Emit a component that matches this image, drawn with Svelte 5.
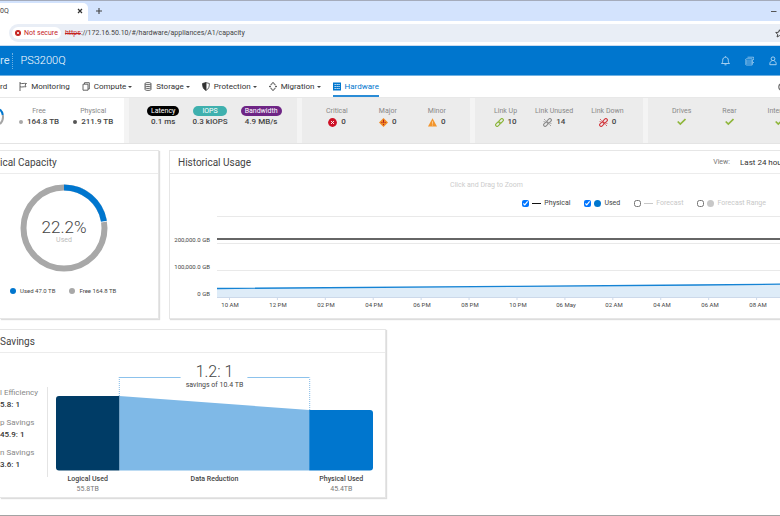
<script>
  const nav = [
    { label: 'Monitoring', icon: 'flag', menu: false },
    { label: 'Compute', icon: 'compute', menu: true },
    { label: 'Storage', icon: 'storage', menu: true },
    { label: 'Protection', icon: 'shield', menu: true },
    { label: 'Migration', icon: 'migration', menu: true },
    { label: 'Hardware', icon: 'hardware', menu: false, active: true }
  ];
  const perf = [
    { label: 'Latency', value: '0.1 ms', tone: 'black' },
    { label: 'IOPS', value: '0.3 kIOPS', tone: 'teal' },
    { label: 'Bandwidth', value: '4.9 MB/s', tone: 'purple' }
  ];
  const alerts = [
    { label: 'Critical', value: 0, icon: 'critical' },
    { label: 'Major', value: 0, icon: 'major' },
    { label: 'Minor', value: 0, icon: 'minor' }
  ];
  const links = [
    { label: 'Link Up', value: 10, color: '#8ab53a', broken: false },
    { label: 'Link Unused', value: 14, color: '#8c8c8c', broken: true },
    { label: 'Link Down', value: 0, color: '#d2393f', broken: true }
  ];
  const parts = ['Drives', 'Rear', 'Internal'];
  const hours = ['10 AM', '12 PM', '02 PM', '04 PM', '06 PM', '08 PM', '10 PM', '06 May', '02 AM', '04 AM', '06 AM', '08 AM'];
  const levels = ['200,000.0 GB', '100,000.0 GB', '0 GB'];
  const ratios = [
    { label: 'l Efficiency', value: '5.8: 1' },
    { label: 'p Savings', value: '45.9: 1' },
    { label: 'n Savings', value: '3.6: 1' }
  ];
  let series = $state([
    { label: 'Physical', mark: 'line', color: '#111', on: true },
    { label: 'Used', mark: 'disc', color: '#0076ce', on: true },
    { label: 'Forecast', mark: 'line', color: '#c8c8c8', on: false },
    { label: 'Forecast Range', mark: 'disc', color: '#c8c8c8', on: false }
  ]);
  const ring = 2 * Math.PI * 40.5;
</script>

<div class="page">
  <div class="tabs">
    <div class="tab"><span>0Q</span><button aria-label="Close tab"><svg width="6" height="6" viewBox="0 0 6 6"><path d="M1 1l4 4M5 1L1 5" stroke="#333" stroke-width="1.2" /></svg></button></div>
    <button class="newtab" aria-label="New tab"><svg width="6" height="6" viewBox="0 0 6 6"><path d="M3 0v6M0 3h6" stroke="#444" stroke-width="1.1" /></svg></button>
    <button class="minimize" aria-label="Minimize"><svg width="6" height="6" viewBox="0 0 6 6"><path d="M0 3.500h5.500" stroke="#555" /></svg></button>
  </div>
  <div class="toolbar">
    <div class="address">
      <span class="chip">
        <svg width="6" height="6" viewBox="0 0 6 6"><circle cx="3" cy="3" r="3" fill="#c5221f" /><path d="M1.900 1.900l2.200 2.200M4.100 1.900L1.900 4.100" stroke="#fff" stroke-width=".8" /></svg>
        Not secure
      </span>
      <span class="url"><s>https</s>://172.16.50.10/#/hardware/appliances/A1/capacity</span>
      <svg class="star" width="9" height="9" viewBox="0 0 9 9"><path d="M4.500 .8l1.100 2.500 2.700.2-2 1.800.6 2.700-2.400-1.400L2.100 8l.6-2.700-2-1.800 2.700-.2z" fill="none" stroke="#444" /></svg>
    </div>
  </div>

  <header>
    <span class="brand">re</span>
    <span class="product">PS3200Q</span>
    <div class="tools">
      <button aria-label="Alerts"><svg width="9" height="10" viewBox="0 0 9 10"><path d="M.5 7.500c1-.8 1.200-1.600 1.200-3.200C1.700 2.400 2.800 1.200 4.500 1.200s2.800 1.200 2.800 3.100c0 1.600.2 2.400 1.200 3.200zM3.500 8.800h2M4.500 .3v.9" /></svg></button>
      <button aria-label="Jobs"><svg width="9" height="10" viewBox="0 0 9 10"><path d="M2.500 1.200h6v1.500M7.200 2.800H1.500Q.6 2.800.6 3.900t.9 1.100h6.500M1.500 5Q.6 5 .6 6t.9 1h6.500M1.500 7Q.6 7 .6 8t.9 1h5.700V2.800M8.500 3v1M8.500 6v1" stroke-width=".7" /></svg></button>
      <button aria-label="Account"><svg width="8" height="10" viewBox="0 0 8 10"><circle cx="4" cy="2.800" r="1.900" /><path d="M2.700 5C1.300 5.500.8 6.500.8 8.700h6.400C7.200 6.500 6.700 5.500 5.300 5" /></svg></button>
    </div>
  </header>

  <nav>
    <a class="first" href="#dashboard">rd</a>
    {#each nav as item}
      <a href="#{item.icon}" class:active={item.active}>
        <svg width="8" height="9" viewBox="0 0 8 9" fill="none" stroke="#555" stroke-width=".9">
          {#if item.icon === 'flag'}
            <path d="M1 0v9M1 1.200c2 .9 4-.2 6.500.3L6 3l1 1.800C5 4.500 3 5.300 1 4.800" />
          {:else if item.icon === 'compute'}
            <path d="M1 2.200h5v6H1zM2.500 2V.7h4.800v6.300H6" />
          {:else if item.icon === 'storage'}
            <path d="M1 1.500c0-1.200 6-1.200 6 0v6c0 1.200-6 1.200-6 0zM1 2c1 .9 5 .9 6 0M1 3.900c1 .9 5 .9 6 0M1 5.800c1 .9 5 .9 6 0" />
          {:else if item.icon === 'shield'}
            <path d="M4 .6L.6 1.500c0 3.500.7 5.500 3.400 6.900z" fill="#333" stroke="#333" /><path d="M4 .6l3.400.9c0 3.500-.7 5.500-3.400 6.900" />
          {:else if item.icon === 'migration'}
            <path d="M2 3.200V2h1.200M4.800 2H6v1.200M6 5.800V7H4.800M3.200 7H2V5.800M0 4.500h2M6 4.500h2M4 .4v1.600M4 7v1.600M3 1.400l1-1 1 1M3 7.600l1 1 1-1M1 3.600l-.8.9.8.9M7 3.600l.8.9-.8.9" />
          {:else}
            <path d="M0 .5h8v8H0z" fill="#0076ce" stroke="none" /><path d="M1.500 2h1.300v1H1.500zM3.500 2h1.300v1H3.500zM5.400 2h1.300v1H5.400zM1.500 4h1.300v1H1.500zM3.500 4h1.300v1H3.500zM5.400 4h1.300v1H5.400zM1.500 6h1.300v1H1.500zM3.500 6h1.300v1H3.500zM5.400 6h1.300v1H5.400z" fill="#d7ebfa" stroke="none" />
          {/if}
        </svg>
        {item.label}
        {#if item.menu}<i class="caret"></i>{/if}
      </a>
    {/each}
    <button class="settings" aria-label="Settings"><svg width="8" height="8" viewBox="0 0 8 8"><circle cx="4" cy="4" r="3.200" fill="none" stroke="#666" stroke-width="1.200" /></svg></button>
  </nav>

  <section class="strip">
    <div class="capacity">
      <svg width="5" height="30" viewBox="0 0 5 30"><g fill="none" stroke-width="2"><path d="M0 7.500A10 10 0 0 1 2.800 13" stroke="#0076ce" /><path d="M2.800 13A10 10 0 0 1 0 22" stroke="#a5a5a5" /></g></svg>
      <div class="kpi"><span>Free</span><b><i class="dot light"></i>164.8 TB</b></div>
      <div class="kpi"><span>Physical</span><b><i class="dot dark"></i>211.9 TB</b></div>
    </div>
    <div class="tile perf">
      {#each perf as p}
        <div class="kpi"><span class="pill {p.tone}">{p.label}</span><b>{p.value}</b></div>
      {/each}
    </div>
    <div class="tile wide">
      {#each alerts as a}
        <div class="kpi"><span>{a.label}</span><b>
          <svg width="9" height="9" viewBox="0 0 9 9">
            {#if a.icon === 'critical'}
              <circle cx="4.500" cy="4.500" r="4.400" fill="#ce1126" /><path d="M3 3l3 3M6 3L3 6" stroke="#fff" stroke-width=".9" />
            {:else if a.icon === 'major'}
              <path d="M4.500 0L9 4.500 4.500 9 0 4.500z" fill="#f08a24" /><path d="M4.500 1.800v3M4.500 5.900v1.200M2.400 4.500h1M5.600 4.500h1" stroke="#b01c1c" />
            {:else}
              <path d="M4.500 .3L9 8.500H0z" fill="#f2952d" /><path d="M4.500 3.200v2.600M4.500 6.500v1" stroke="#fbd9ae" stroke-width=".8" />
            {/if}
          </svg>{a.value}</b></div>
      {/each}
    </div>
    <div class="tile links">
      {#each links as l}
        <div class="kpi"><span>{l.label}</span><b>
          <svg width="9" height="9" viewBox="0 0 9 9" fill="none" stroke={l.color} stroke-width="1.100">
            <rect x="-2.600" y="-1.500" width="5.200" height="3" rx="1.500" transform="translate(2.900 6.100) rotate(-45)" />
            <rect x="-2.600" y="-1.500" width="5.200" height="3" rx="1.500" transform="translate(6.100 2.900) rotate(-45)" />
            {#if l.broken}<path d="M1 1l1.600 1.600M6.400 6.400L8 8M.6 3.500h1M7.400 5.500h1" stroke-width=".8" />{/if}
          </svg>{l.value}</b></div>
      {/each}
    </div>
    <div class="tile wide">
      {#each parts as part}
        <div class="kpi"><span>{part}</span><b><svg width="9" height="9" viewBox="0 0 9 9"><path d="M.7 4.500l2.600 2.600L8.500 2" fill="none" stroke="#8fb63c" stroke-width="1.700" /></svg></b></div>
      {/each}
    </div>
  </section>

  <main>
    <div class="row">
      <section class="card physical">
        <h2>ical Capacity</h2>
        <div class="donut">
          <svg width="88" height="88" viewBox="0 0 88 88">
            <g fill="none" stroke-width="6" transform="rotate(-90 44 44)">
              <circle cx="44" cy="44" r="40.500" stroke="#a8a8a8" />
              <circle cx="44" cy="44" r="40.500" stroke="#fff" stroke-dasharray="{ring * 0.226} {ring}" />
              <circle cx="44" cy="44" r="40.500" stroke="#0076ce" stroke-dasharray="{ring * 0.223} {ring}" />
            </g>
          </svg>
          <div class="center"><strong>22.2%</strong><span>Used</span></div>
        </div>
        <div class="keys"><span><i class="dot blue"></i>Used 47.0 TB</span><span><i class="dot light"></i>Free 164.8 TB</span></div>
      </section>

      <section class="card history">
        <h2>Historical Usage
          <label class="view">View:
            <select><option>Last 24 hours</option></select>
          </label>
        </h2>
        <p class="hint">Click and Drag to Zoom</p>
        <div class="legend">
          {#each series as s}
            <label class:off={!s.on}><input type="checkbox" bind:checked={s.on} /><i class={s.mark} style="background:{s.color}"></i>{s.label}</label>
          {/each}
        </div>
        <div class="plot">
          <div class="levels">{#each levels as level}<span>{level}</span>{/each}</div>
          <svg height="86" viewBox="0 0 587 86" preserveAspectRatio="none">
            <path d="M0 2.500h587M0 29.500h587M0 56.500h587" stroke="#e9e9e9" />
            <path d="M0 74.500L300 72.300 480 71 587 70v14H0z" fill="#deecf8" />
            <path d="M0 83.500h587M12.500 83v3M60.500 83v3M108.500 83v3M156.500 83v3M204.500 83v3M252.500 83v3M300.500 83v3M348.500 83v3M396.500 83v3M444.500 83v3M492.500 83v3M540.500 83v3" stroke="#ccd9ea" fill="none" />
            <path d="M0 74.500L300 72.300 480 71 587 70" stroke="#1583d4" stroke-width="1.300" fill="none" />
            <path d="M0 25h587" stroke="#333" stroke-width="1.600" />
          </svg>
        </div>
        <div class="hours">{#each hours as hour}<span>{hour}</span>{/each}</div>
      </section>
    </div>

    <section class="card savings">
      <h2>Savings</h2>
      <div class="body">
        <div class="ratios">
          {#each ratios as r}<div><span>{r.label}</span><b>{r.value}</b></div>{/each}
        </div>
        <div class="reduction">
          <div class="figure">
            <svg height="94" viewBox="0 0 318 94" preserveAspectRatio="none">
              <path d="M63.500 19L254 33v60.500H63.500z" fill="#7fb9e7" />
              <path d="M67 19h-3.500H3a3 3 0 0 0-3 3v68.500a3 3 0 0 0 3 3h60.500V19z" fill="#003c66" />
              <path d="M254 33h61a3 3 0 0 1 3 3v54.500a3 3 0 0 1-3 3h-61z" fill="#0076ce" />
              <path d="M63.500 19V.5M254.500 33V.5" stroke="#7fb9e7" stroke-dasharray="1 1" fill="none" />
              <path d="M63 .5h62M192 .5h62" stroke="#8cc2ec" fill="none" />
            </svg>
            <div class="total"><strong>1.2: 1</strong><span>savings of 10.4 TB</span></div>
          </div>
          <div class="captions">
            <div><b>Logical Used</b><span>55.8TB</span></div>
            <div><b>Data Reduction</b></div>
            <div><b>Physical Used</b><span>45.4TB</span></div>
          </div>
        </div>
      </div>
    </section>
  </main>
  <div class="edge"></div>
</div>

<style>
  :global(body) { margin: 0; background: #fff; }
  .page {
    display: flex; flex-direction: column; min-height: 100vh; overflow: hidden;
    font: 7px/10px Roboto, "Liberation Sans", sans-serif; color: #444;
  }
  .page * { box-sizing: border-box; }
  svg { display: block; flex: none; }
  button { border: 0; padding: 0; background: none; font: inherit; color: inherit; }
  a { color: inherit; text-decoration: none; }
  h2, p { margin: 0; font-weight: 400; }

  .tabs { display: flex; align-items: center; height: 21px; background: #d3e3fd; border-top: 1px solid #a4abbb; padding-right: 3px; }
  .tab { display: flex; align-items: center; justify-content: space-between; align-self: flex-end; width: 88px; height: 18px; padding: 0 5px 2px 0; background: #fff; border-radius: 0 5px 0 0; }
  .newtab { margin-left: 8px; }
  .minimize { margin-left: auto; }
  .toolbar { height: 25px; padding: 3px 0 3px 9px; border-bottom: 1px solid #cbdcf0; }
  .address { display: flex; align-items: center; gap: 4px; height: 18px; padding-left: 3px; margin-right: -4px; border-radius: 9px 0 0 9px; background: #e9eef6; }
  .chip { display: flex; align-items: center; gap: 3px; height: 12px; padding: 0 3px; border-radius: 6px; background: #fff; color: #c5221f; white-space: nowrap; }
  .url { color: #444; }
  .url s { color: #c5221f; }
  .star { margin-left: auto; }

  header { display: flex; align-items: center; height: 30px; background: #0076ce; border-bottom: 1px solid #6fb1e2; color: #cfe5f7; font-size: 11px; line-height: 16px; }
  .brand { padding-right: 3px; border-right: 1px dotted #6fb1e2; }
  .product { padding-left: 7px; font-weight: 300; color: #fff; }
  .tools { display: flex; gap: 15px; margin-left: auto; padding-right: 3px; }
  .tools svg { fill: none; stroke: #b5d8f3; stroke-width: .9; }

  nav { display: flex; align-items: stretch; gap: 12px; height: 21px; font-size: 8px; color: #333; }
  nav a { display: flex; align-items: center; gap: 4px; border-bottom: 2px solid transparent; padding-top: 2px; }
  nav .active { color: #0076ce; border-color: #2a8cd6; }
  .caret { border: 2px solid transparent; border-top-color: #444; border-bottom: 0; margin-left: -2px; }
  .settings { margin: 0 -6px 0 auto; }

  .strip { display: grid; grid-template-columns: 124px 168px 168px 168px minmax(168px, 1fr); gap: 5px; height: 47px; background: linear-gradient(90deg, #fff 124px, #f4f4f4 124px); border-top: 1px solid #e8e8e8; border-bottom: 1px solid #e4e4e4; white-space: nowrap; }
  .capacity { display: flex; gap: 14px; padding-top: 4px; }
  .tile { display: flex; background: #ececec; padding-top: 4px; }
  .perf { gap: 13px; padding-left: 18px; }
  .wide { gap: 31px; padding-left: 24px; }
  .links { gap: 18px; padding-left: 19px; }
  .kpi { display: flex; flex-direction: column; align-items: center; gap: 1px; padding-top: 4px; color: #888; height: 36px; }
  .kpi b { display: flex; align-items: center; gap: 4px; font-weight: 500; font-size: 8px; color: #444; }
  .kpi .pill { padding: 0 4px; border-radius: 5px; color: #fff; }
  .black { background: #000; }
  .kpi .teal { background: #3fb0ae; padding: 0 9px; }
  .purple { background: #6e2585; }
  .dot { display: block; width: 6px; height: 6px; border-radius: 50%; }
  .kpi .dot { width: 4px; height: 4px; }
  .light { background: #a8a8a8; }
  .dark { background: #555; }
  .blue { background: #0076ce; }

  main { padding: 6px 0 12px; display: flex; flex-direction: column; gap: 10px; }
  .row { display: grid; grid-template-columns: 159px minmax(0, 1fr); gap: 10px; margin-right: -24px; }
  .card { border: 1px solid #e6e6e6; border-left-width: 0; box-shadow: 1px 1px 1px #ddd; }
  .card h2 { display: flex; justify-content: space-between; height: 23px; padding-left: 8px; border-bottom: 1px solid #ececec; font-size: 10px; line-height: 23px; color: #444; }
  .physical h2, .savings h2 { padding-left: 0; }
  .history { border-left-width: 1px; }
  .donut { display: grid; place-items: center; margin: 10px 30px 14px 0; }
  .donut > * { grid-area: 1 / 1; }
  .center { display: flex; flex-direction: column; align-items: center; color: #bbb; padding-top: 6px; }
  .center strong { font-weight: 300; font-size: 17px; line-height: 18px; color: #444; }
  .center span { line-height: 8px; }
  .keys { display: flex; gap: 14px; padding-left: 10px; font-size: 6px; }
  .keys span { display: flex; align-items: center; gap: 4px; }

  .view { display: flex; gap: 10px; padding-right: 8px; font-size: 7px; color: #777; }
  select { appearance: none; border: 0; padding: 0; margin: 0; width: 55px; background: none; font: inherit; font-size: 8px; color: #333; }
  .hint { padding-top: 6px; text-align: center; color: #ccc; font-size: 7px; }
  .legend { display: flex; justify-content: flex-end; gap: 14px; padding: 8px 37px 6px 0; }
  .legend label { display: flex; align-items: center; gap: 3px; }
  .legend .off { color: #c8c8c8; }
  .legend input { width: 7px; height: 7px; margin: 0; }
  .line { width: 9px; height: 1px; }
  .disc { width: 7px; height: 7px; border-radius: 50%; }
  .plot { display: grid; grid-template-columns: 40px 1fr; gap: 7px; }
  .plot svg { width: 100%; }
  .levels { display: flex; flex-direction: column; align-items: flex-end; gap: 17px; padding-top: 21px; font-size: 6px; white-space: nowrap; }
  .hours { display: flex; height: 18px; padding-left: 36px; font-size: 6px; }
  .hours span { flex: 0 0 48px; text-align: center; }

  .savings { width: 386px; }
  .body { display: flex; gap: 8px; padding: 24px 12px 3px 0; }
  .ratios { display: flex; flex-direction: column; gap: 6px; width: 48px; height: 90px; margin-top: 10px; border-right: 1px solid #e4e4e4; font-size: 8px; line-height: 12px; color: #888; }
  .ratios div { display: flex; flex-direction: column; white-space: nowrap; }
  .ratios b { font-weight: 500; color: #333; }
  .reduction { flex: 1; }
  .figure { display: grid; }
  .figure > * { grid-area: 1 / 1; }
  .figure svg { width: 100%; }
  .total { display: flex; flex-direction: column; align-items: center; margin-top: -13px; }
  .total strong { font-weight: 300; font-size: 16px; line-height: 16px; }
  .captions { display: grid; grid-template-columns: 1fr 3fr 1fr; padding-top: 3px; }
  .captions div { display: flex; flex-direction: column; align-items: center; }
  .captions b { font-weight: 500; }
  .captions span { color: #777; }
  .edge { height: 1px; margin-top: auto; background: #a3a3a3; }
</style>
